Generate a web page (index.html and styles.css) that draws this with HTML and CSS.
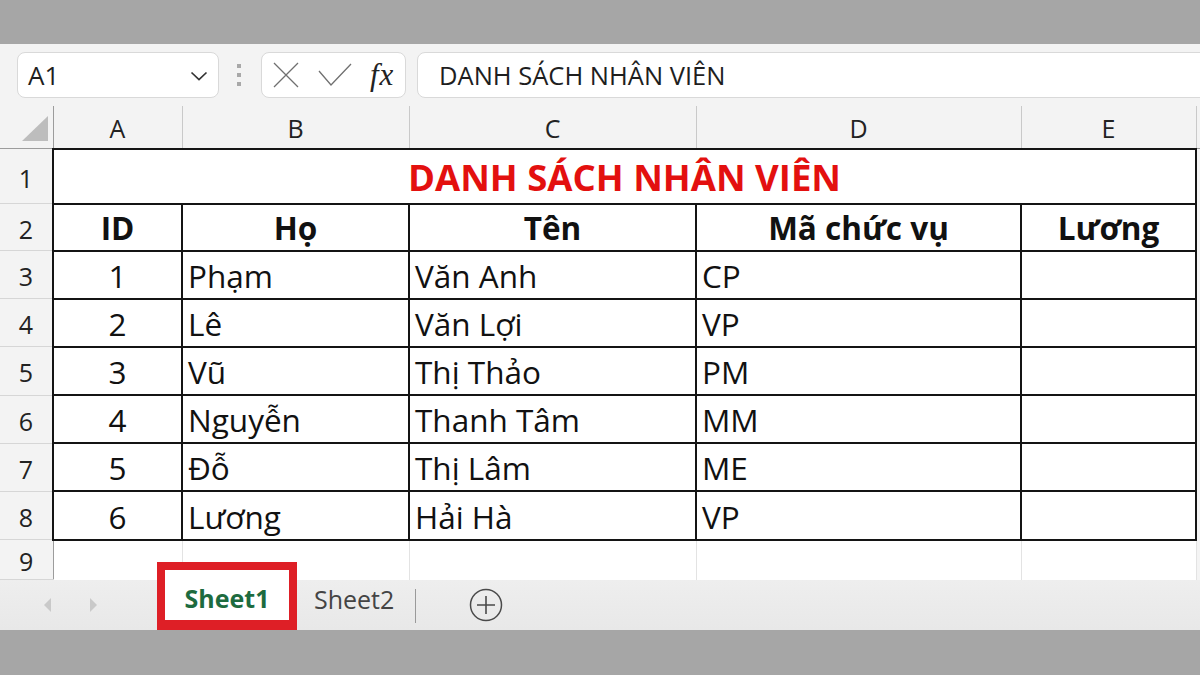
FILE: index.html
```html
<!DOCTYPE html>
<html lang="vi">
<head>
<meta charset="utf-8">
<title>Excel - Danh sách nhân viên</title>
<link rel="stylesheet" href="styles.css">
</head>
<body>
<div class="app">
  <div class="frame-band"></div>
  <div class="toolbar">
    <div class="namebox">
      <span class="namebox-text">A1</span>
      <svg class="chev" width="18" height="10" viewBox="0 0 18 10"><path d="M1.5 1.5 L9 8.5 L16.5 1.5" fill="none" stroke="#333" stroke-width="1.7"/></svg>
    </div>
    <div class="grip"><span></span><span></span><span></span></div>
    <div class="fxbox">
      <svg width="26" height="26" viewBox="0 0 26 26"><path d="M1 1 L25 25 M25 1 L1 25" stroke="#707070" stroke-width="1.3" fill="none"/></svg>
      <svg width="34" height="24" viewBox="0 0 34 24"><path d="M1 8 L13 22 L33 1" stroke="#707070" stroke-width="1.3" fill="none"/></svg>
      <span class="fx">fx</span>
    </div>
    <div class="formula">DANH SÁCH NHÂN VIÊN</div>
  </div>

  <div class="sheet">
    <table class="grid">
      <colgroup>
        <col class="c-rh"><col class="c-a"><col class="c-b"><col class="c-c"><col class="c-d"><col class="c-e"><col class="c-f">
      </colgroup>
      <thead>
        <tr class="r-head">
          <th class="corner"><svg width="26" height="25" viewBox="0 0 26 25"><polygon points="26,0 26,25 0,25" fill="#bdbdbd"/></svg></th>
          <th>A</th><th>B</th><th>C</th><th>D</th><th>E</th><th class="fill"></th>
        </tr>
      </thead>
      <tbody>
        <tr class="r-title">
          <td class="rh">1</td>
          <td class="cell title" colspan="5">DANH SÁCH NHÂN VIÊN</td>
          <td class="fill"></td>
        </tr>
        <tr class="r-hdr">
          <td class="rh">2</td>
          <td class="cell hdr">ID</td><td class="cell hdr">Họ</td><td class="cell hdr">Tên</td><td class="cell hdr">Mã chức vụ</td><td class="cell hdr">Lương</td>
          <td class="fill"></td>
        </tr>
        <tr class="r-data">
          <td class="rh">3</td>
          <td class="cell num">1</td><td class="cell">Phạm</td><td class="cell">Văn Anh</td><td class="cell">CP</td><td class="cell"></td>
          <td class="fill"></td>
        </tr>
        <tr class="r-data">
          <td class="rh">4</td>
          <td class="cell num">2</td><td class="cell">Lê</td><td class="cell">Văn Lợi</td><td class="cell">VP</td><td class="cell"></td>
          <td class="fill"></td>
        </tr>
        <tr class="r-data">
          <td class="rh">5</td>
          <td class="cell num">3</td><td class="cell">Vũ</td><td class="cell">Thị Thảo</td><td class="cell">PM</td><td class="cell"></td>
          <td class="fill"></td>
        </tr>
        <tr class="r-data">
          <td class="rh">6</td>
          <td class="cell num">4</td><td class="cell">Nguyễn</td><td class="cell">Thanh Tâm</td><td class="cell">MM</td><td class="cell"></td>
          <td class="fill"></td>
        </tr>
        <tr class="r-data">
          <td class="rh">7</td>
          <td class="cell num">5</td><td class="cell">Đỗ</td><td class="cell">Thị Lâm</td><td class="cell">ME</td><td class="cell"></td>
          <td class="fill"></td>
        </tr>
        <tr class="r-data">
          <td class="rh">8</td>
          <td class="cell num">6</td><td class="cell">Lương</td><td class="cell">Hải Hà</td><td class="cell">VP</td><td class="cell"></td>
          <td class="fill"></td>
        </tr>
        <tr class="r-empty">
          <td class="rh">9</td>
          <td class="blank"></td><td class="blank"></td><td class="blank"></td><td class="blank"></td><td class="blank"></td>
          <td class="fill"></td>
        </tr>
      </tbody>
    </table>
  </div>

  <div class="tabs">
    <div class="nav">
      <svg width="8" height="14" viewBox="0 0 8 14"><polygon points="7,0 7,14 0,7" fill="#c9c9c9"/></svg>
      <svg width="8" height="14" viewBox="0 0 8 14"><polygon points="1,0 1,14 8,7" fill="#c9c9c9"/></svg>
    </div>
    <div class="tab active">Sheet1</div>
    <div class="tab">Sheet2</div>
    <div class="tab-sep"></div>
    <svg class="add" width="34" height="34" viewBox="0 0 34 34"><circle cx="17" cy="17" r="15.5" fill="none" stroke="#4a4a4a" stroke-width="1.5"/><path d="M17 8 V26 M8 17 H26" stroke="#4a4a4a" stroke-width="1.6"/></svg>
  </div>
  <div class="frame-band bottom"></div>
</div>
</body>
</html>
```

FILE: styles.css
```css
* { box-sizing: border-box; }
html, body { margin: 0; padding: 0; }
body {
  width: 1200px;
  height: 675px;
  overflow: hidden;
  font-family: "Open Sans", "Noto Sans", sans-serif;
  color: #111;
  background: #a6a6a6;
}
.app { width: 1200px; height: 675px; display: flex; flex-direction: column; }
.frame-band { height: 44px; background: #a6a6a6; flex: none; }
.frame-band.bottom { height: 45px; }

/* toolbar */
.toolbar {
  height: 62px;
  flex: none;
  background: #f3f3f3;
  display: flex;
  align-items: center;
  padding-left: 17px;
  overflow: hidden;
}
.namebox {
  width: 202px;
  height: 46px;
  background: #fff;
  border: 1px solid #d9d9d9;
  border-radius: 8px;
  display: flex;
  align-items: center;
  justify-content: space-between;
  padding: 0 10px 0 10px;
}
.namebox-text { font-size: 26px; color: #1e1e1e; }
.chev { margin-top: 2px; }
.grip {
  width: 4px;
  margin: 0 20px 0 18px;
  display: flex;
  flex-direction: column;
  gap: 5px;
}
.grip span { width: 4px; height: 4px; background: #a8a8a8; display: block; }
.fxbox {
  width: 145px;
  height: 46px;
  background: #fff;
  border: 1px solid #d9d9d9;
  border-radius: 8px;
  display: flex;
  align-items: center;
  padding-left: 11px;
  gap: 19px;
}
.fx {
  font-family: "Liberation Serif", "DejaVu Serif", serif;
  font-style: italic;
  font-size: 31px;
  color: #222;
  margin-left: -1px;
  letter-spacing: 1px;
}
.formula {
  flex: 1;
  margin-left: 11px;
  margin-right: -12px;
  height: 46px;
  background: #fff;
  border: 1px solid #d9d9d9;
  border-radius: 8px;
  display: flex;
  align-items: center;
  padding-left: 21px;
  font-size: 25.5px;
  color: #1e1e1e;
}

/* sheet */
.sheet {
  height: 474px;
  flex: none;
  background: #fff;
  overflow: hidden;
}
.grid {
  width: 1200px;
  table-layout: fixed;
  border-collapse: collapse;
}
.c-rh { width: 53px; }
.c-a { width: 129px; }
.c-b { width: 227px; }
.c-c { width: 287px; }
.c-d { width: 325px; }
.c-e { width: 175px; }
.c-f { width: 4px; }

.r-head { height: 40px; }
.r-head th {
  background: #f3f3f3;
  font-weight: normal;
  font-size: 25px;
  color: #222;
  border-bottom: 1px solid #9c9c9c;
  border-left: 1px solid #c9c9c9;
  padding: 2px 0 0 0;
}
.r-head th.corner {
  border-left: none;
  border-right: 1px solid #9c9c9c;
  text-align: right;
  padding: 8px 5px 0 0;
  vertical-align: top;
}
.r-head th.fill { background: #f3f3f3; }

.r-title { height: 55px; }
.r-hdr { height: 47px; }
.r-data { height: 48.2px; }
.r-empty { height: 40px; }

td { padding: 0; }
.rh {
  background: #f3f3f3;
  border-right: 1px solid #9c9c9c;
  border-bottom: 1px solid #d6d6d6;
  text-align: center;
  font-size: 25px;
  color: #222;
  padding-top: 3px;
}
.fill { background: #f4f4f4; }

.cell {
  border: 2px solid #141414;
  font-size: 31.5px;
  color: #111;
  padding: 1px 0 0 5px;
  white-space: nowrap;
  overflow: hidden;
}
.cell.num { text-align: center; padding-left: 0; }
.cell.hdr { text-align: center; font-weight: bold; padding-left: 0; }
.cell.title {
  text-align: center;
  font-weight: bold;
  font-size: 36.5px;
  color: #e3100f;
  padding: 2px 0 0 0;
}
.blank { border-right: 1px solid #e3e3e3; }

/* tabs */
.tabs {
  height: 50px;
  flex: none;
  background: linear-gradient(#eeeeee, #e8e8e8);
  display: flex;
  align-items: center;
  position: relative;
  z-index: 1;
}
.nav {
  width: 157px;
  display: flex;
  gap: 37px;
  padding-left: 44px;
  padding-top: 0;
}
.tab {
  font-size: 25px;
  color: #444;
  margin-top: -12px;
}
.tab.active {
  align-self: flex-end;
  margin-top: 0;
  width: 140px;
  height: 68px;
  border: 8px solid #de1f26;
  border-bottom-width: 10px;
  background: #fff;
  color: #1d6b3f;
  font-weight: bold;
  display: flex;
  align-items: center;
  justify-content: center;
  padding-top: 6px;
}
.tab + .tab { margin-left: 17px; }
.tab-sep {
  width: 1px;
  height: 34px;
  background: #9a9a9a;
  margin-left: 21px;
  margin-top: 2px;
}
.add { margin-left: 53px; margin-top: 0; }
```
